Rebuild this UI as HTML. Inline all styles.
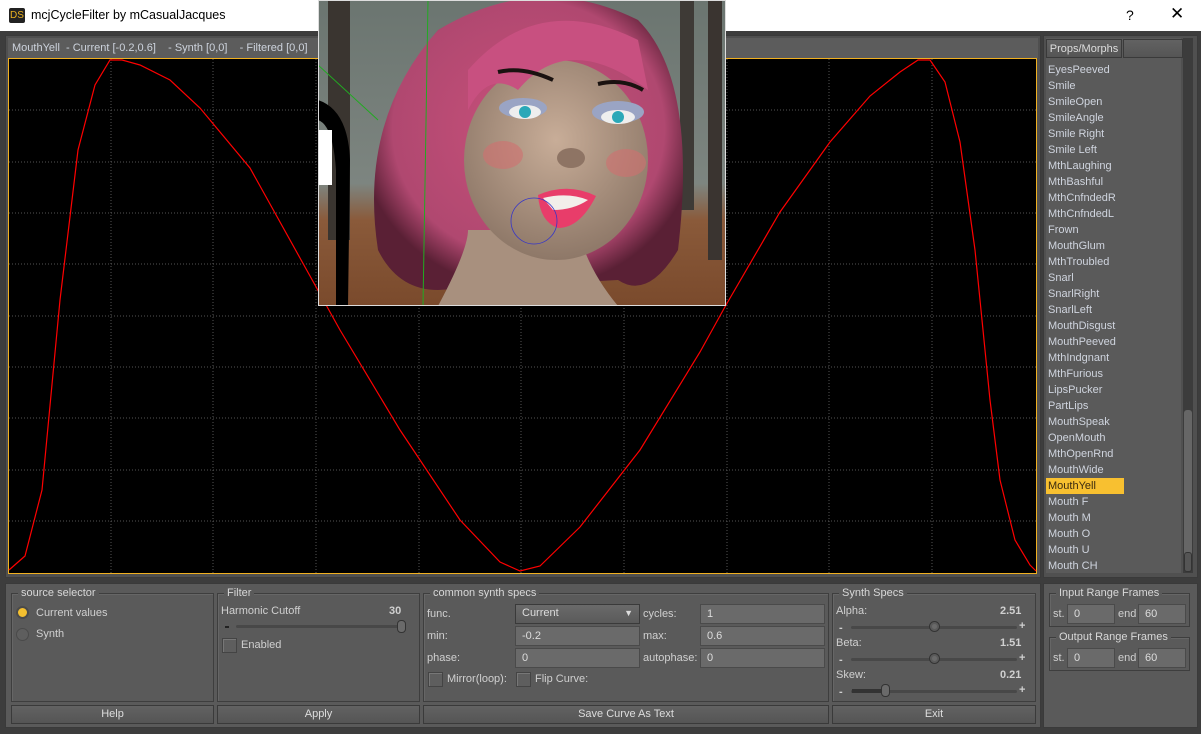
<!DOCTYPE html>
<html><head><meta charset="utf-8"><style>
*{box-sizing:border-box;margin:0;padding:0}
body{width:1201px;height:734px;overflow:hidden;background:#3d3d3d;font-family:"Liberation Sans",Arial,sans-serif;font-size:11px;color:#d0d0d0;position:relative}
.a{position:absolute}
.title{left:0;top:0;width:1201px;height:31px;background:#fff;color:#000;font-size:12px}
.grp{position:absolute;border:1px solid #3e3e3e;box-shadow:inset 1px 1px 0 #666;}
.lg{position:absolute;top:-7px;left:6px;background:#5a5a5a;padding:0 3px;color:#d8d8d8;font-size:11px;line-height:12px}
.btn{position:absolute;background:linear-gradient(#626262,#555);border:1px solid #3a3a3a;color:#ddd;text-align:center;line-height:17px;height:19px}
.inp{position:absolute;background:#6a6a6a;border:1px solid #4a4a4a;color:#ddd;padding-left:6px;line-height:18px;height:20px}
.cb{position:absolute;width:15px;height:15px;background:#5e5e5e;border:1px solid #444;box-shadow:inset 1px 1px 0 #777}
.sl{position:absolute;height:3px;background:#484848;border-radius:2px}
.kn{position:absolute;width:11px;height:11px;border-radius:50%;background:#6a6a6a;border:1px solid #333;box-shadow:inset 0 0 0 2px #5a5a5a}
.li{position:absolute;left:1046px;height:16px;line-height:16px;padding-left:2px;color:#cfd4de;font-size:11px}
</style></head><body>
<div class="a title">
 <div class="a" style="left:9px;top:8px;width:16px;height:15px;background:#222;border-radius:2px;color:#e8b020;font-size:10px;line-height:15px;text-align:center">DS</div>
 <div class="a" style="left:31px;top:8px;font-size:12.5px">mcjCycleFilter by mCasualJacques</div>
 <div class="a" style="left:1126px;top:7px;font-size:14px">?</div>
 <div class="a" style="left:1170px;top:4px;font-size:17px">✕</div>
</div>
<!-- graph frame -->
<div class="a" style="left:5px;top:35px;width:1036px;height:543px;background:#4f4f4f;border:1px solid #3a3a3a"></div>
<div class="a" style="left:8px;top:38px;width:1030px;height:20px;background:#5c5c5c;color:#cdd3dd;line-height:20px;padding-left:4px;white-space:pre">MouthYell  - Current [-0.2,0.6]    - Synth [0,0]    - Filtered [0,0]    p</div>
<svg class="a" style="left:8px;top:58px" width="1030" height="517" viewBox="8 58 1030 517">
<rect x="8.5" y="58.5" width="1028" height="515" fill="#000" stroke="#f0b020"/>
<g stroke="#555" stroke-dasharray="1 2" fill="none">
<path d="M111 59V573M213 59V573M316 59V573M419 59V573M521 59V573M624 59V573M727 59V573M829 59V573M932 59V573"/>
<path d="M9 110H1036M9 162H1036M9 213H1036M9 264H1036M9 316H1036M9 367H1036M9 418H1036M9 470H1036M9 521H1036"/>
</g>
<polyline fill="none" stroke="#f00" stroke-width="1.2" points="9,570 25,556 42,490 60,300 78,150 95,85 110,60 122,60 140,65 170,80 200,108 250,168 300,258 340,330 400,430 460,520 500,562 520,571 540,566 580,527 640,450 700,352 726,305 780,212 830,142 870,96 900,72 918,60 930,60 945,82 960,142 975,250 990,400 1000,480 1015,540 1030,565 1036,571"/>
</svg>
<!-- photo overlay -->
<svg class="a" style="left:318px;top:0" width="408" height="306" viewBox="0 0 408 306">
<defs>
<linearGradient id="bg" x1="0" y1="0" x2="0" y2="1"><stop offset="0" stop-color="#6b7570"/><stop offset=".6" stop-color="#7d8580"/><stop offset=".72" stop-color="#8a5a3a"/><stop offset="1" stop-color="#7a4a2c"/></linearGradient>
<radialGradient id="hair" cx=".5" cy=".45" r=".55"><stop offset="0" stop-color="#c8507a"/><stop offset=".8" stop-color="#b04870"/><stop offset="1" stop-color="#5a2035"/></radialGradient>
<radialGradient id="skin" cx=".5" cy=".4" r=".6"><stop offset="0" stop-color="#c8ad98"/><stop offset="1" stop-color="#8e7868"/></radialGradient>
</defs>
<rect width="408" height="306" fill="url(#bg)"/>
<rect x="10" y="0" width="22" height="240" fill="#3a3530"/>
<rect x="362" y="0" width="14" height="210" fill="#3e3a36"/>
<rect x="390" y="0" width="14" height="260" fill="#3a3430"/>
<path d="M0 100 Q30 110 32 160 L30 306 L18 306 L18 170 Q15 125 0 120Z" fill="#000"/>
<rect x="0" y="130" width="14" height="55" fill="#fff"/>
<path d="M60 250 Q40 120 120 30 Q220 -30 320 20 Q380 80 360 250 Q330 300 300 280 L120 290 Q80 290 60 250Z" fill="url(#hair)"/>
<path d="M120 306 Q150 250 150 230 L260 230 Q270 270 300 306Z" fill="#a8907e"/>
<ellipse cx="238" cy="160" rx="92" ry="100" fill="url(#skin)"/>
<path d="M150 70 Q220 -10 320 40 L330 90 Q250 30 200 90 Q170 70 150 110Z" fill="#c85080"/>
<path d="M180 72 Q205 66 235 80" stroke="#1a1210" stroke-width="4" fill="none"/>
<path d="M280 84 Q305 78 325 90" stroke="#1a1210" stroke-width="4" fill="none"/>
<ellipse cx="205" cy="108" rx="24" ry="10" fill="#9aa4c4"/>
<ellipse cx="300" cy="112" rx="26" ry="11" fill="#9aa4c4"/>
<ellipse cx="207" cy="112" rx="16" ry="7" fill="#eee"/><circle cx="207" cy="112" r="6" fill="#2aa8b8"/>
<ellipse cx="300" cy="117" rx="17" ry="7" fill="#eee"/><circle cx="300" cy="117" r="6" fill="#2aa8b8"/>
<ellipse cx="185" cy="155" rx="20" ry="14" fill="#d07070" opacity=".6"/>
<ellipse cx="308" cy="163" rx="20" ry="14" fill="#d07070" opacity=".6"/>
<ellipse cx="253" cy="158" rx="14" ry="10" fill="#8e7464"/>
<path d="M220 195 Q250 182 278 196 Q262 228 240 228 Q222 222 220 195Z" fill="#e83d6a"/>
<path d="M225 198 Q250 192 270 200 Q255 210 235 210Z" fill="#f2eeea"/>
<circle cx="216" cy="221" r="23" fill="none" stroke="#3535c8" stroke-width=".8"/>
<line x1="110" y1="0" x2="105" y2="306" stroke="#2a2" stroke-width="1"/>
<line x1="0" y1="65" x2="60" y2="120" stroke="#2a2" stroke-width="1"/>
<rect x=".5" y=".5" width="407" height="305" fill="none" stroke="#ddd"/>
</svg>
<!-- right list -->
<div class="a" style="left:1043px;top:35px;width:155px;height:543px;background:#505050;border:1px solid #3a3a3a"></div>
<div class="a" style="left:1046px;top:38px;width:135px;height:535px;background:#5a5a5a"></div>
<div class="btn" style="left:1046px;top:39px;width:76px;height:19px;line-height:18px;font-size:11px">Props/Morphs</div>
<div class="btn" style="left:1123px;top:39px;width:60px;height:19px"></div>
<div class="a" style="left:1183px;top:38px;width:10px;height:535px;background:#3c3c3c"></div>
<div class="a" style="left:1184px;top:410px;width:8px;height:150px;background:#666;border-radius:3px"></div>
<div class="a" style="left:1184px;top:552px;width:8px;height:20px;background:#555;border-radius:3px;border:1px solid #333"></div>
<div class="li" style="top:54px;height:6px;overflow:hidden"></div>
<div class="li" style="top:62px">EyesPeeved</div>
<div class="li" style="top:78px">Smile</div>
<div class="li" style="top:94px">SmileOpen</div>
<div class="li" style="top:110px">SmileAngle</div>
<div class="li" style="top:126px">Smile Right</div>
<div class="li" style="top:142px">Smile Left</div>
<div class="li" style="top:158px">MthLaughing</div>
<div class="li" style="top:174px">MthBashful</div>
<div class="li" style="top:190px">MthCnfndedR</div>
<div class="li" style="top:206px">MthCnfndedL</div>
<div class="li" style="top:222px">Frown</div>
<div class="li" style="top:238px">MouthGlum</div>
<div class="li" style="top:254px">MthTroubled</div>
<div class="li" style="top:270px">Snarl</div>
<div class="li" style="top:286px">SnarlRight</div>
<div class="li" style="top:302px">SnarlLeft</div>
<div class="li" style="top:318px">MouthDisgust</div>
<div class="li" style="top:334px">MouthPeeved</div>
<div class="li" style="top:350px">MthIndgnant</div>
<div class="li" style="top:366px">MthFurious</div>
<div class="li" style="top:382px">LipsPucker</div>
<div class="li" style="top:398px">PartLips</div>
<div class="li" style="top:414px">MouthSpeak</div>
<div class="li" style="top:430px">OpenMouth</div>
<div class="li" style="top:446px">MthOpenRnd</div>
<div class="li" style="top:462px">MouthWide</div>
<div class="li" style="top:478px;width:78px;background:#f8c030;color:#3a2a10">MouthYell</div>
<div class="li" style="top:494px">Mouth F</div>
<div class="li" style="top:510px">Mouth M</div>
<div class="li" style="top:526px">Mouth O</div>
<div class="li" style="top:542px">Mouth U</div>
<div class="li" style="top:558px">Mouth CH</div>
<!-- bottom frame -->
<div class="a" style="left:5px;top:583px;width:1036px;height:145px;background:#5a5a5a;border:1px solid #3a3a3a"></div>
<div class="a" style="left:1043px;top:583px;width:155px;height:145px;background:#5a5a5a;border:1px solid #3a3a3a"></div>
<div class="grp" style="left:11px;top:593px;width:203px;height:109px"><span class="lg">source selector</span></div>
<div class="a" style="left:16px;top:606px;width:13px;height:13px;border-radius:50%;background:#f4c030;border:2px solid #4a4a4a"></div>
<div class="a" style="left:36px;top:607px">Current values</div>
<div class="a" style="left:16px;top:628px;width:13px;height:13px;border-radius:50%;background:#5e5e5e;border:1px solid #4a4a4a"></div>
<div class="a" style="left:36px;top:628px">Synth</div>
<div class="grp" style="left:217px;top:593px;width:203px;height:109px"><span class="lg">Filter</span></div>
<div class="a" style="left:221px;top:605px">Harmonic Cutoff</div>
<div class="a" style="left:389px;top:605px;font-weight:bold">30</div>
<div class="a" style="left:225px;top:626px;width:4px;height:2px;background:#222"></div>
<div class="sl" style="left:236px;top:625px;width:168px"></div>
<div class="a" style="left:397px;top:620px;width:9px;height:13px;border-radius:4px;background:#6a6a6a;border:1px solid #333"></div>
<div class="cb" style="left:222px;top:638px"></div>
<div class="a" style="left:241px;top:639px">Enabled</div>
<div class="grp" style="left:423px;top:593px;width:406px;height:109px"><span class="lg">common synth specs</span></div>
<div class="a" style="left:427px;top:608px">func.</div>
<div class="btn" style="left:515px;top:604px;width:125px;height:20px;text-align:left;padding-left:6px;background:linear-gradient(#6a6a6a,#5a5a5a)">Current<span style="position:absolute;right:6px;top:0;font-size:9px">▼</span></div>
<div class="a" style="left:643px;top:608px">cycles:</div>
<div class="inp" style="left:700px;top:604px;width:125px">1</div>
<div class="a" style="left:427px;top:630px">min:</div>
<div class="inp" style="left:515px;top:626px;width:125px">-0.2</div>
<div class="a" style="left:643px;top:630px">max:</div>
<div class="inp" style="left:700px;top:626px;width:125px">0.6</div>
<div class="a" style="left:427px;top:652px">phase:</div>
<div class="inp" style="left:515px;top:648px;width:125px">0</div>
<div class="a" style="left:643px;top:652px">autophase:</div>
<div class="inp" style="left:700px;top:648px;width:125px">0</div>
<div class="cb" style="left:428px;top:672px"></div>
<div class="a" style="left:447px;top:673px">Mirror(loop):</div>
<div class="cb" style="left:516px;top:672px"></div>
<div class="a" style="left:535px;top:673px">Flip Curve:</div>
<div class="grp" style="left:832px;top:593px;width:204px;height:109px"><span class="lg">Synth Specs</span></div>
<div class="a" style="left:836px;top:605px">Alpha:</div><div class="a" style="left:1000px;top:605px;font-weight:bold">2.51</div>
<div class="a" style="left:839px;top:622px;font-weight:bold">-</div><div class="sl" style="left:851px;top:626px;width:166px"></div><div class="kn" style="left:929px;top:621px"></div><div class="a" style="left:1019px;top:620px;font-weight:bold">+</div>
<div class="a" style="left:836px;top:637px">Beta:</div><div class="a" style="left:1000px;top:637px;font-weight:bold">1.51</div>
<div class="a" style="left:839px;top:654px;font-weight:bold">-</div><div class="sl" style="left:851px;top:658px;width:166px"></div><div class="kn" style="left:929px;top:653px"></div><div class="a" style="left:1019px;top:652px;font-weight:bold">+</div>
<div class="a" style="left:836px;top:669px">Skew:</div><div class="a" style="left:1000px;top:669px;font-weight:bold">0.21</div>
<div class="a" style="left:839px;top:686px;font-weight:bold">-</div><div class="sl" style="left:851px;top:690px;width:166px"></div><div class="a" style="left:852px;top:689px;width:34px;height:4px;background:#333"></div><div class="a" style="left:881px;top:684px;width:9px;height:13px;border-radius:4px;background:#6a6a6a;border:1px solid #333"></div><div class="a" style="left:1019px;top:684px;font-weight:bold">+</div>
<div class="btn" style="left:11px;top:705px;width:203px">Help</div>
<div class="btn" style="left:217px;top:705px;width:203px">Apply</div>
<div class="btn" style="left:423px;top:705px;width:406px">Save Curve As Text</div>
<div class="btn" style="left:832px;top:705px;width:204px">Exit</div>
<div class="grp" style="left:1049px;top:593px;width:141px;height:34px"><span class="lg">Input Range Frames</span></div>
<div class="a" style="left:1053px;top:608px">st.</div><div class="inp" style="left:1067px;top:604px;width:48px">0</div>
<div class="a" style="left:1118px;top:608px">end</div><div class="inp" style="left:1138px;top:604px;width:48px">60</div>
<div class="grp" style="left:1049px;top:637px;width:141px;height:34px"><span class="lg">Output Range Frames</span></div>
<div class="a" style="left:1053px;top:652px">st.</div><div class="inp" style="left:1067px;top:648px;width:48px">0</div>
<div class="a" style="left:1118px;top:652px">end</div><div class="inp" style="left:1138px;top:648px;width:48px">60</div>
</body></html>
